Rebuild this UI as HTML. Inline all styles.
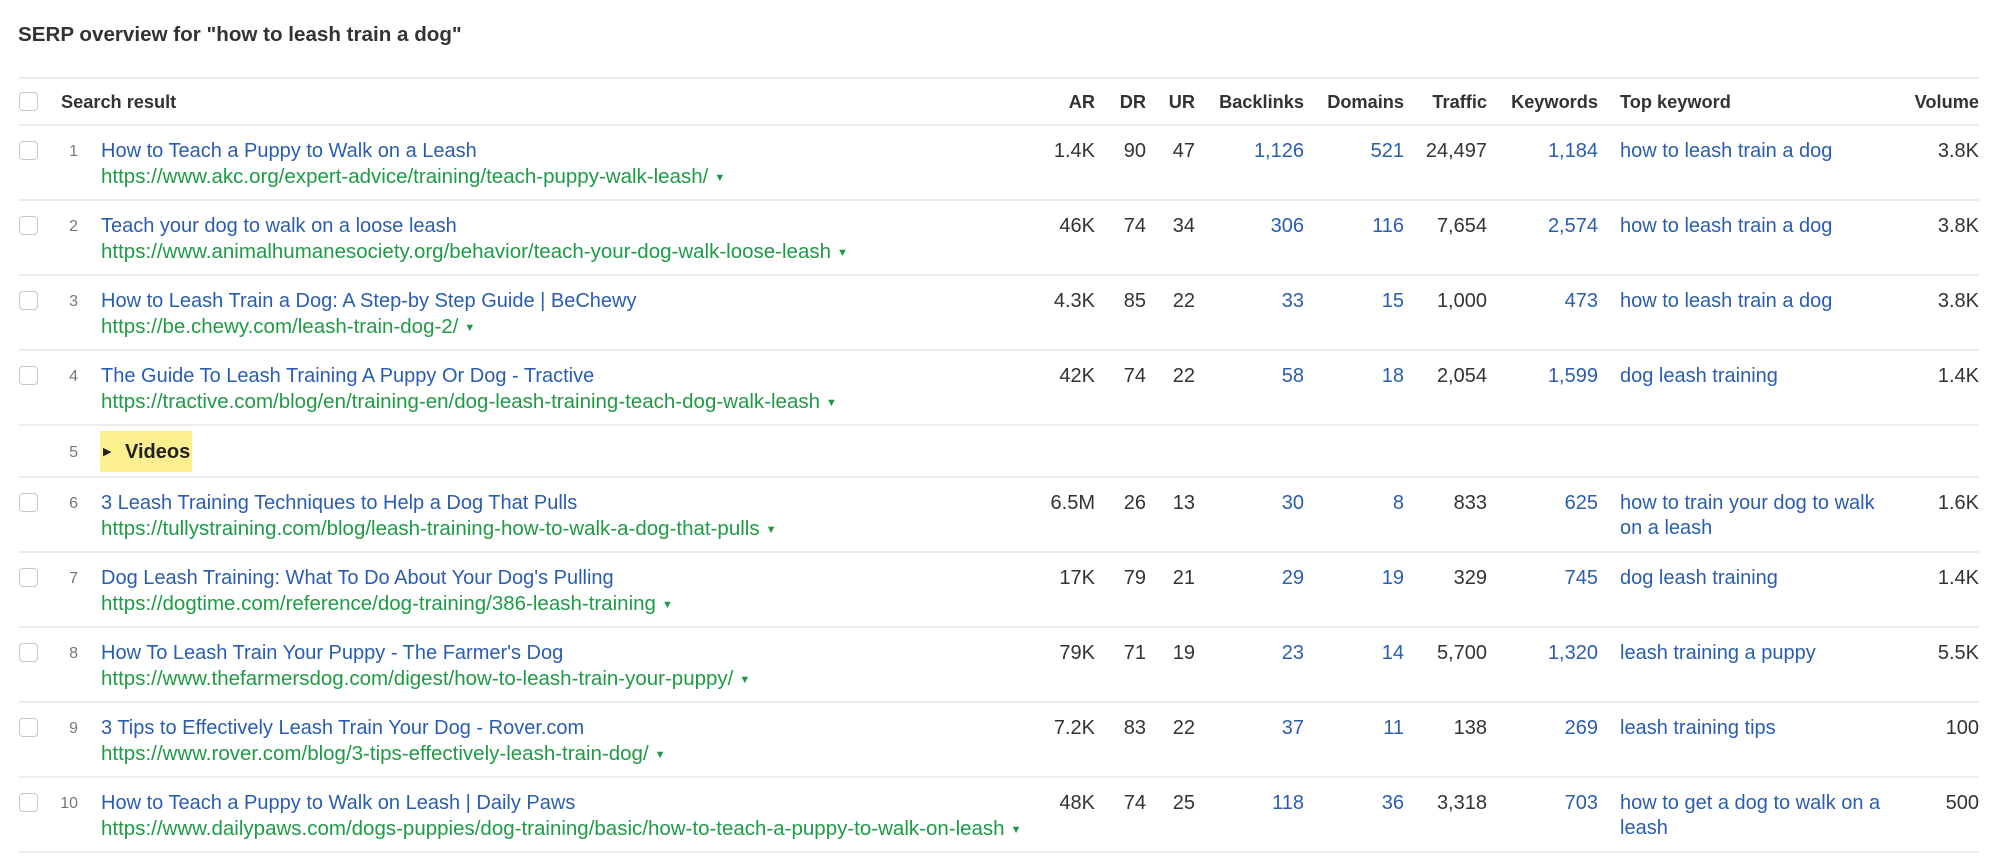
<!DOCTYPE html>
<html><head><meta charset="utf-8"><style>
*{margin:0;padding:0;box-sizing:border-box}
body{width:1999px;height:861px;background:#fff;font-family:"Liberation Sans",Arial,sans-serif;color:#333;position:relative;overflow:hidden;font-size:20px}
.h1{position:absolute;left:18px;top:23px;font-weight:bold;font-size:20.6px;color:#333}
.line{position:absolute;left:19px;width:1960px;height:2px;background:#ececec}
.row{position:absolute;left:0;width:1999px}
.cb{position:absolute;left:19px;width:19px;height:19px;border:1.5px solid #c8c8c8;border-radius:4px;background:#fff}
.c{position:absolute;white-space:nowrap;line-height:25px;top:14px}
.u{top:39px;font-size:20.5px}
.r{text-align:right}
.b{color:#2a5db0}
.g{color:#1f9a45}
.n{color:#777;font-size:16px}
.hd{font-weight:bold;color:#333;font-size:18.2px}
.tri{font-size:11px;margin-left:6px;vertical-align:2px}
.kw{white-space:normal;width:268px}
</style></head><body>
<div class="h1">SERP overview for "how to leash train a dog"</div>
<div class="line" style="top:77px"></div>
<div class="row" style="top:77px">
<div class="cb" style="top:15px"></div>
<div class="c hd" style="left:61px;top:13px">Search result</div>
<div class="c hd r" style="right:904px;top:13px">AR</div>
<div class="c hd r" style="right:853px;top:13px">DR</div>
<div class="c hd r" style="right:804px;top:13px">UR</div>
<div class="c hd r" style="right:695px;top:13px">Backlinks</div>
<div class="c hd r" style="right:595px;top:13px">Domains</div>
<div class="c hd r" style="right:512px;top:13px">Traffic</div>
<div class="c hd r" style="right:401px;top:13px">Keywords</div>
<div class="c hd" style="left:1620px;top:13px">Top keyword</div>
<div class="c hd r" style="right:20px;top:13px">Volume</div>
</div>
<div class="line" style="top:124px"></div>

<div class="row" style="top:125px">
<div class="cb" style="top:16px"></div><div class="c n r" style="right:1921px">1</div>
<div class="c b" style="left:101px">How to Teach a Puppy to Walk on a Leash</div>
<div class="c g u" style="left:101px">https://www.akc.org/expert-advice/training/teach-puppy-walk-leash/<span class="tri">▼</span></div>
<div class="c r" style="right:904px">1.4K</div><div class="c r" style="right:853px">90</div><div class="c r" style="right:804px">47</div>
<div class="c r b" style="right:695px">1,126</div><div class="c r b" style="right:595px">521</div><div class="c r" style="right:512px">24,497</div>
<div class="c r b" style="right:401px">1,184</div><div class="c b kw" style="left:1620px">how to leash train a dog</div><div class="c r" style="right:20px">3.8K</div>
</div>
<div class="line" style="top:199px"></div>

<div class="row" style="top:200px">
<div class="cb" style="top:16px"></div><div class="c n r" style="right:1921px">2</div>
<div class="c b" style="left:101px">Teach your dog to walk on a loose leash</div>
<div class="c g u" style="left:101px">https://www.animalhumanesociety.org/behavior/teach-your-dog-walk-loose-leash<span class="tri">▼</span></div>
<div class="c r" style="right:904px">46K</div><div class="c r" style="right:853px">74</div><div class="c r" style="right:804px">34</div>
<div class="c r b" style="right:695px">306</div><div class="c r b" style="right:595px">116</div><div class="c r" style="right:512px">7,654</div>
<div class="c r b" style="right:401px">2,574</div><div class="c b kw" style="left:1620px">how to leash train a dog</div><div class="c r" style="right:20px">3.8K</div>
</div>
<div class="line" style="top:274px"></div>

<div class="row" style="top:275px">
<div class="cb" style="top:16px"></div><div class="c n r" style="right:1921px">3</div>
<div class="c b" style="left:101px">How to Leash Train a Dog: A Step-by Step Guide | BeChewy</div>
<div class="c g u" style="left:101px">https://be.chewy.com/leash-train-dog-2/<span class="tri">▼</span></div>
<div class="c r" style="right:904px">4.3K</div><div class="c r" style="right:853px">85</div><div class="c r" style="right:804px">22</div>
<div class="c r b" style="right:695px">33</div><div class="c r b" style="right:595px">15</div><div class="c r" style="right:512px">1,000</div>
<div class="c r b" style="right:401px">473</div><div class="c b kw" style="left:1620px">how to leash train a dog</div><div class="c r" style="right:20px">3.8K</div>
</div>
<div class="line" style="top:349px"></div>

<div class="row" style="top:350px">
<div class="cb" style="top:16px"></div><div class="c n r" style="right:1921px">4</div>
<div class="c b" style="left:101px">The Guide To Leash Training A Puppy Or Dog - Tractive</div>
<div class="c g u" style="left:101px">https://tractive.com/blog/en/training-en/dog-leash-training-teach-dog-walk-leash<span class="tri">▼</span></div>
<div class="c r" style="right:904px">42K</div><div class="c r" style="right:853px">74</div><div class="c r" style="right:804px">22</div>
<div class="c r b" style="right:695px">58</div><div class="c r b" style="right:595px">18</div><div class="c r" style="right:512px">2,054</div>
<div class="c r b" style="right:401px">1,599</div><div class="c b kw" style="left:1620px">dog leash training</div><div class="c r" style="right:20px">1.4K</div>
</div>
<div class="line" style="top:424px"></div>

<div class="row" style="top:425px">
<div class="c n r" style="right:1921px;top:15px">5</div>
<div style="position:absolute;left:100px;top:6px;width:92px;height:41px;background:#fbef8f"></div>
<div class="c" style="left:103px;top:15px;font-size:11px;color:#222">▶</div>
<div class="c" style="left:125px;top:15px;font-weight:bold;color:#222">Videos</div>
</div>
<div class="line" style="top:476px"></div>

<div class="row" style="top:477px">
<div class="cb" style="top:16px"></div><div class="c n r" style="right:1921px">6</div>
<div class="c b" style="left:101px">3 Leash Training Techniques to Help a Dog That Pulls</div>
<div class="c g u" style="left:101px">https://tullystraining.com/blog/leash-training-how-to-walk-a-dog-that-pulls<span class="tri">▼</span></div>
<div class="c r" style="right:904px">6.5M</div><div class="c r" style="right:853px">26</div><div class="c r" style="right:804px">13</div>
<div class="c r b" style="right:695px">30</div><div class="c r b" style="right:595px">8</div><div class="c r" style="right:512px">833</div>
<div class="c r b" style="right:401px">625</div><div class="c b kw" style="left:1620px">how to train your dog to walk on a leash</div><div class="c r" style="right:20px">1.6K</div>
</div>
<div class="line" style="top:551px"></div>

<div class="row" style="top:552px">
<div class="cb" style="top:16px"></div><div class="c n r" style="right:1921px">7</div>
<div class="c b" style="left:101px">Dog Leash Training: What To Do About Your Dog's Pulling</div>
<div class="c g u" style="left:101px">https://dogtime.com/reference/dog-training/386-leash-training<span class="tri">▼</span></div>
<div class="c r" style="right:904px">17K</div><div class="c r" style="right:853px">79</div><div class="c r" style="right:804px">21</div>
<div class="c r b" style="right:695px">29</div><div class="c r b" style="right:595px">19</div><div class="c r" style="right:512px">329</div>
<div class="c r b" style="right:401px">745</div><div class="c b kw" style="left:1620px">dog leash training</div><div class="c r" style="right:20px">1.4K</div>
</div>
<div class="line" style="top:626px"></div>

<div class="row" style="top:627px">
<div class="cb" style="top:16px"></div><div class="c n r" style="right:1921px">8</div>
<div class="c b" style="left:101px">How To Leash Train Your Puppy - The Farmer's Dog</div>
<div class="c g u" style="left:101px">https://www.thefarmersdog.com/digest/how-to-leash-train-your-puppy/<span class="tri">▼</span></div>
<div class="c r" style="right:904px">79K</div><div class="c r" style="right:853px">71</div><div class="c r" style="right:804px">19</div>
<div class="c r b" style="right:695px">23</div><div class="c r b" style="right:595px">14</div><div class="c r" style="right:512px">5,700</div>
<div class="c r b" style="right:401px">1,320</div><div class="c b kw" style="left:1620px">leash training a puppy</div><div class="c r" style="right:20px">5.5K</div>
</div>
<div class="line" style="top:701px"></div>

<div class="row" style="top:702px">
<div class="cb" style="top:16px"></div><div class="c n r" style="right:1921px">9</div>
<div class="c b" style="left:101px">3 Tips to Effectively Leash Train Your Dog - Rover.com</div>
<div class="c g u" style="left:101px">https://www.rover.com/blog/3-tips-effectively-leash-train-dog/<span class="tri">▼</span></div>
<div class="c r" style="right:904px">7.2K</div><div class="c r" style="right:853px">83</div><div class="c r" style="right:804px">22</div>
<div class="c r b" style="right:695px">37</div><div class="c r b" style="right:595px">11</div><div class="c r" style="right:512px">138</div>
<div class="c r b" style="right:401px">269</div><div class="c b kw" style="left:1620px">leash training tips</div><div class="c r" style="right:20px">100</div>
</div>
<div class="line" style="top:776px"></div>

<div class="row" style="top:777px">
<div class="cb" style="top:16px"></div><div class="c n r" style="right:1921px">10</div>
<div class="c b" style="left:101px">How to Teach a Puppy to Walk on Leash | Daily Paws</div>
<div class="c g u" style="left:101px">https://www.dailypaws.com/dogs-puppies/dog-training/basic/how-to-teach-a-puppy-to-walk-on-leash<span class="tri">▼</span></div>
<div class="c r" style="right:904px">48K</div><div class="c r" style="right:853px">74</div><div class="c r" style="right:804px">25</div>
<div class="c r b" style="right:695px">118</div><div class="c r b" style="right:595px">36</div><div class="c r" style="right:512px">3,318</div>
<div class="c r b" style="right:401px">703</div><div class="c b kw" style="left:1620px">how to get a dog to walk on a leash</div><div class="c r" style="right:20px">500</div>
</div>
<div class="line" style="top:851px"></div>
</body></html>
